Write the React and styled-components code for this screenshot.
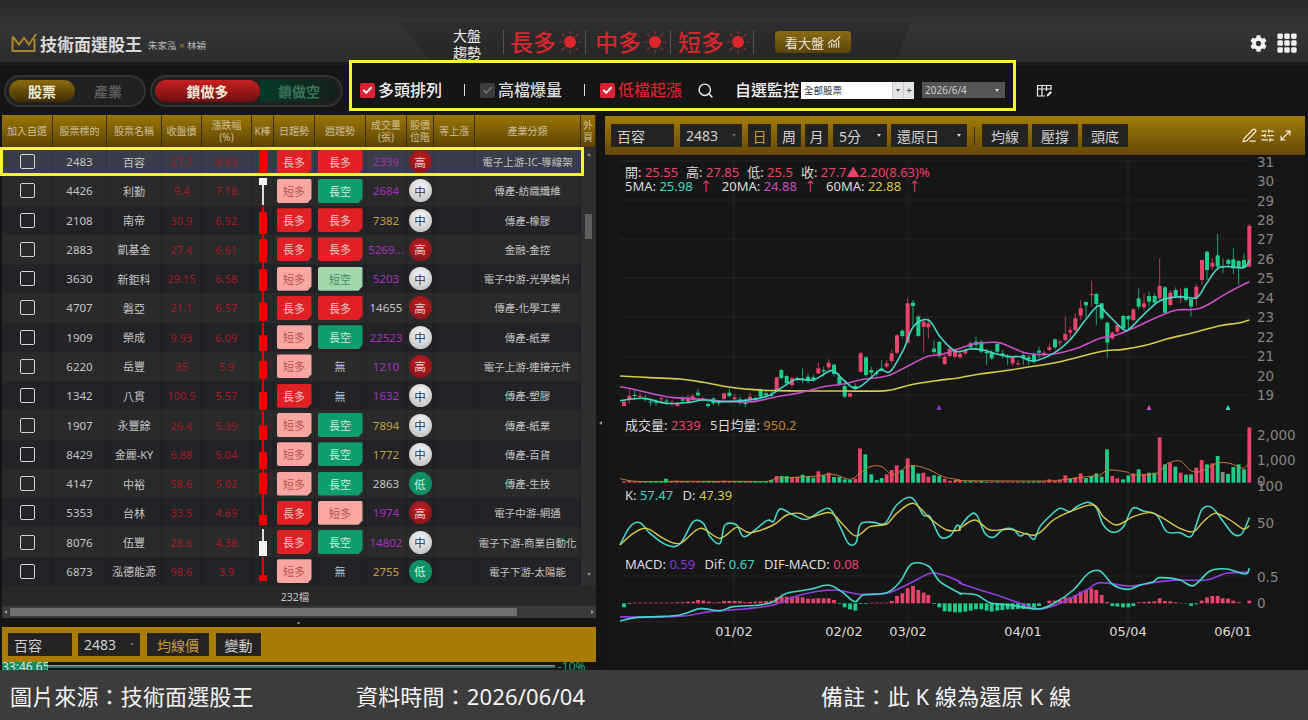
import React from 'react';
import styled, { createGlobalStyle } from 'styled-components';
import { Search, PenLine, SlidersHorizontal, MoveDiagonal, ChartNoAxesCombined, Check } from 'lucide-react';
import { FaCog } from 'react-icons/fa';
import { BsGrid3X3GapFill } from 'react-icons/bs';

const GlobalStyle = createGlobalStyle`
  html, body { margin: 0; padding: 0; background: #141414; overflow: hidden; }
  * { box-sizing: border-box; }
`;

const FONT = `"Noto Sans", "Noto Sans CJK TC", sans-serif`;
const RED = '#e8446a';
const GREEN = '#1fcc8a';
const CYAN = '#45d6c8';
const MAGENTA = '#c94fc4';
const YELLOW = '#d8c94a';
const PURPLE = '#8a3ad0';

const Page = styled.div`
  width: 1308px;
  height: 720px;
  display: flex;
  flex-direction: column;
  background: #141414;
  font-family: ${FONT};
  overflow: hidden;
`;

/* ---------- top bar ---------- */
const TopBar = styled.div`
  height: 62px;
  display: flex;
  padding-left: 11px;
  background: linear-gradient(#2a2a2a, #353535 45%, #2c2c2c);
`;

const Logo = styled.div`
  width: 387px;
  display: flex;
  align-items: center;
  padding-top: 24px;
`;

const LogoTitle = styled.span`
  margin-left: 3px;
  font-size: 17px;
  font-weight: 700;
  color: #d8d8d8;
`;

const LogoSub = styled.span`
  margin-left: 6px;
  font-size: 9.5px;
  color: #b8b8b8;
  margin-top: 3px;
  i { color: #a8862c; font-style: normal; }
`;

const TrendPanel = styled.div`
  position: relative;
  width: 525px;
  height: 40px;
  margin-top: 22px;
  padding-left: 55px;
  display: flex;
  align-items: center;
  &::before {
    content: '';
    position: absolute;
    inset: 0;
    background: linear-gradient(#2e2e2e, #262626);
    clip-path: polygon(2px 0, 514px 0, 497px 100%, 32px 100%);
  }
  & > * { position: relative; }
`;

const TrendLabel = styled.div`
  width: 28px;
  font-size: 14px;
  line-height: 17px;
  color: #ececec;
  margin-top: 3px;
`;

const TrendDivider = styled.div`
  width: 1px;
  height: 24px;
  background: #555;
  margin-left: ${p => p.$ml}px;
`;

const TrendText = styled.span`
  margin-left: ${p => p.$ml}px;
  font-size: 23px;
  font-weight: 500;
  line-height: 26px;
  color: #d8262c;
`;

const SunIcon = styled.svg`
  width: 24px;
  height: 24px;
  margin-left: 2px;
`;

const Sun = () => (
  <SunIcon viewBox="0 0 24 24">
    <circle cx="12" cy="12" r="6" fill="#e0262a" />
    <g stroke="#9a3030" strokeWidth="1.2" strokeLinecap="round">
      <path d="M12 1v3M12 20v3M1 12h3M20 12h3M4.2 4.2l2.1 2.1M17.7 17.7l2.1 2.1M4.2 19.8l2.1-2.1M17.7 6.3l2.1-2.1" />
    </g>
  </SunIcon>
);

const MarketButton = styled.div`
  margin-left: 21px;
  width: 76px;
  height: 22px;
  display: flex;
  align-items: center;
  justify-content: center;
  gap: 3px;
  border-radius: 4px;
  font-size: 13px;
  color: #e8e4d4;
  background: linear-gradient(#8a6a12, #5a430c);
`;

const Tools = styled.div`
  margin-left: auto;
  padding: 24px 10px 0 0;
  display: flex;
  align-items: center;
  gap: 9px;
  color: #f2f2f2;
`;

/* ---------- filter toolbar ---------- */
const Toolbar = styled.div`
  height: 51px;
  display: flex;
  align-items: flex-start;
  padding-left: 4px;
  background: #151515;
  border-top: 3px solid #1d1d1d;
`;

const Pill = styled.div`
  position: relative;
  width: ${p => p.$w}px;
  height: 32px;
  margin-top: 10px;
  margin-right: 4px;
  padding: 3px;
  display: flex;
  border-radius: 16px;
  background: #202020;
  border: 2px solid #333;
`;

const PillOn = styled.div`
  width: ${p => p.$w}px;
  display: flex;
  align-items: center;
  justify-content: center;
  border-radius: 13px;
  font-size: 14px;
  font-weight: 600;
  color: #f0ead8;
  background: ${p => p.$bg};
`;

const PillOff = styled.div`
  flex: 1;
  display: flex;
  align-items: center;
  justify-content: center;
  font-size: 14px;
  font-weight: 600;
  color: ${p => p.$color};
  background: ${p => p.$bg || 'none'};
  border-radius: 0 13px 13px 0;
`;

const FilterGroup = styled.div`
  position: relative;
  z-index: 2;
  width: 667px;
  height: 51px;
  margin: -5px 0 0 2px;
  padding: 9px 0 0 8px;
  display: flex;
  align-items: center;
  border: 3px solid #f6f62c;
  background: #151515;
`;

const CheckBox = styled.span`
  width: 15px;
  height: 15px;
  margin-right: 3px;
  display: inline-flex;
  align-items: center;
  justify-content: center;
  border-radius: 2px;
  color: ${p => (p.$on ? '#fff' : '#777')};
  background: ${p => (p.$on ? '#dc2230' : '#3c3c3c')};
`;

const FilterLabel = styled.span`
  font-size: 16px;
  font-weight: 500;
  line-height: 20px;
  white-space: nowrap;
  color: ${p => p.$color || '#f0f0f0'};
  margin-left: ${p => p.$ml || 0}px;
`;

const Pipe = styled.span`
  width: 1px;
  height: 12px;
  margin: 0 15px 0 22px;
  background: #ddd;
`;

const SearchSlot = styled.span`
  display: flex;
  margin-left: 15px;
  color: #eee;
`;

const WatchSelect = styled.div`
  width: 113px;
  height: 17px;
  margin-left: 2px;
  display: flex;
  background: #fff;
  font-size: 9.5px;
  line-height: 17px;
  color: #333;
`;

const WatchText = styled.span`
  flex: 1;
  padding-left: 3px;
`;

const WatchBtn = styled.span`
  width: 11px;
  display: flex;
  align-items: center;
  justify-content: center;
  background: #e4e4e4;
  border-left: 1px solid #ccc;
  color: #555;
  font-size: 10px;
`;

const Caret = styled.span`
  width: 0;
  height: 0;
  border-left: 2.5px solid transparent;
  border-right: 2.5px solid transparent;
  border-top: 3px solid ${p => p.$color || '#ddd'};
`;

const DateSelect = styled.div`
  width: 83px;
  height: 16px;
  margin-left: 8px;
  padding: 0 6px 0 3px;
  display: flex;
  align-items: center;
  justify-content: space-between;
  background: #555;
  font-size: 10px;
  color: #ccc;
`;

const EditSlot = styled.span`
  display: flex;
  margin: 19px 0 0 20px;
`;

/* ---------- main ---------- */
const Main = styled.div`
  height: 557px;
  display: flex;
  background: #141414;
`;

const LeftPanel = styled.div`
  width: 596px;
  padding: 2px 0 0 2px;
  display: flex;
  flex-direction: column;
  flex-shrink: 0;
`;

const COLS = '51px 54px 55px 40px 50px 22px 41px 51px 41px 27px 41px 106px';

const HeaderRow = styled.div`
  display: grid;
  grid-template-columns: ${COLS} 15px;
  height: 32px;
  background: linear-gradient(#9c7608, #5c4305);
`;

const HeadCell = styled.div`
  display: flex;
  align-items: center;
  justify-content: center;
  text-align: center;
  font-size: 10px;
  line-height: 12.5px;
  color: #ccbf98;
  border-right: 1px solid #3a2c06;
`;

const TableBody = styled.div`
  height: 439px;
  display: flex;
`;

const Rows = styled.div`
  width: 579px;
`;

const Row = styled.div`
  position: relative;
  display: grid;
  grid-template-columns: ${COLS};
  height: 29.27px;
  background: ${p => (p.$selected ? '#3a3c4a' : p.$alt ? '#2a2a2b' : '#232327')};
  ${p => p.$selected && `
    &::after {
      content: '';
      position: absolute;
      inset: 0 -3px 0 -2px;
      border: 3px solid #f6f62c;
      pointer-events: none;
    }
  `}
`;

const Cell = styled.div`
  display: flex;
  align-items: center;
  justify-content: center;
  min-width: 0;
  white-space: nowrap;
  overflow: hidden;
  font-size: ${p => p.$size || 11}px;
  color: ${p => p.$color || '#c4c4c4'};
  border-right: 1px solid rgba(0, 0, 0, 0.16);
`;

const RowCheck = styled.span`
  width: 15px;
  height: 15px;
  border: 1.5px solid #d4d4d4;
  border-radius: 2px;
`;

const Tag = styled.div`
  width: ${p => p.$w}px;
  height: 24px;
  display: flex;
  align-items: center;
  justify-content: center;
  font-size: 11px;
  border-radius: 2px;
  clip-path: polygon(0 0, 100% 0, 100% 82%, calc(100% - 4px) 100%, 0 100%);
  color: ${p => p.$color};
  background: ${p => p.$bg};
`;

const Badge = styled.div`
  width: 23px;
  height: 23px;
  display: flex;
  align-items: center;
  justify-content: center;
  border-radius: 50%;
  font-size: 11.5px;
  color: ${p => p.$color};
  background: ${p => p.$bg};
`;

const VScroll = styled.div`
  flex: 1;
  display: flex;
  flex-direction: column;
  align-items: center;
  background: #2e2e30;
  color: #888;
`;

const VThumb = styled.div`
  width: 7px;
  height: 25px;
  margin-top: 58px;
  background: #5e5e5e;
`;

const ScrollArrow = styled.span`
  width: 0;
  height: 0;
  margin-top: ${p => p.$mt || 0}px;
  border-left: 2.5px solid transparent;
  border-right: 2.5px solid transparent;
  border-${p => p.$side}: 3px solid #888;
`;

const TableFoot = styled.div`
  height: 20px;
  padding-right: 8px;
  display: flex;
  align-items: center;
  justify-content: center;
  font-size: 10.5px;
  color: #c4c4c4;
  background: #28282a;
`;

const HScroll = styled.div`
  height: 12px;
  padding: 0 2px;
  display: flex;
  align-items: center;
  background: #3a3a3a;
`;

const HThumb = styled.div`
  width: 507px;
  height: 8px;
  margin: 0 auto 0 3px;
  background: #707070;
`;

const SideArrow = styled.span`
  width: 0;
  height: 0;
  border-top: 2.5px solid transparent;
  border-bottom: 2.5px solid transparent;
  border-${p => p.$side}: 3px solid #999;
`;

const SplitGap = styled.div`
  height: 9px;
  display: flex;
  align-items: center;
  justify-content: center;
  padding-right: 2px;
`;

const Dot = styled.span`
  width: 3px;
  height: 2px;
  background: #666;
`;

const GoldBar = styled.div`
  height: 35px;
  padding-left: 6px;
  display: flex;
  align-items: center;
  gap: 6px;
  background: #a97c08;
`;

const Field = styled.div`
  width: ${p => p.$w}px;
  height: 23px;
  margin-left: ${p => p.$ml || 0}px;
  padding: 0 ${p => (p.$center ? 0 : 5)}px;
  display: flex;
  align-items: center;
  justify-content: ${p => (p.$center ? 'center' : 'space-between')};
  font-size: 14px;
  color: ${p => p.$color || '#d0d0d0'};
  background: #232323;
  border: 1px solid rgba(60, 40, 0, 0.5);
`;

const Strip = styled.div`
  height: 8px;
  display: flex;
  overflow: hidden;
  position: relative;
`;

const StripLabel = styled.div`
  width: 46px;
  font-size: 12px;
  line-height: 10px;
  color: #e0e0e0;
  background: #118a5e;
  white-space: nowrap;
  overflow: hidden;
`;

const StripTrack = styled.div`
  width: 507px;
  height: 3px;
  margin-top: 3px;
  background: #2f6f66;
  border-top: 1px solid #999;
`;

const StripEnd = styled.div`
  margin-left: 3px;
  font-size: 12px;
  line-height: 10px;
  color: #19a87a;
`;

const Splitter = styled.div`
  width: 9px;
  display: flex;
  align-items: center;
  justify-content: center;
  padding-top: 62px;
  flex-shrink: 0;
`;

const RightPanel = styled.div`
  width: 700px;
  padding-top: 3px;
  display: flex;
  flex-direction: column;
`;

const ChartBar = styled.div`
  height: 39px;
  padding: 0 12px 0 6px;
  display: flex;
  align-items: center;
  gap: 4px;
  background: linear-gradient(#a37c08, #64490a);
`;

const BarSep = styled.span`
  width: 1px;
  height: 18px;
  margin: 0 3px 0 3px;
  background: #3a2c06;
`;

const BarIcons = styled.div`
  margin-left: auto;
  display: flex;
  gap: 3px;
  color: #f4ecd4;
`;

const ChartArea = styled.div`
  position: relative;
  flex: 1;
  background: #161616;
`;

const ChartSvg = styled.svg`
  display: block;
  width: 700px;
  height: 515px;
`;

const Legend = styled.div`
  position: absolute;
  left: 20px;
  top: ${p => p.$top}px;
  font-size: 13px;
  line-height: 14px;
  color: #dcdcdc;
  white-space: nowrap;
  b { font-weight: 400; margin-right: ${p => p.$gap || 6}px; }
`;

const AxisText = styled.text`
  font-family: "DejaVu Sans", sans-serif;
  font-size: 13.5px;
  fill: #848484;
`;

const DateText = styled.text`
  font-family: "DejaVu Sans", sans-serif;
  font-size: 13px;
  fill: #dedede;
  text-anchor: middle;
`;

const Caption = styled.div`
  height: 50px;
  display: flex;
  align-items: center;
  padding-left: 10px;
  background: #3c3c3c;
  font-size: 22px;
  color: #f4f4f4;
  white-space: nowrap;
`;

const CaptionItem = styled.span`
  width: ${p => p.$w}px;
  letter-spacing: 0.15px;
`;

/* ---------- data ---------- */
const P = '#a034b8';
const G = '#c0a040';
const W = '#c4c4c4';
const rows = [
  ['2483', '百容', '27.7', '8.63', 'ld', 'ld', '2339', P, 'h', '電子上游-IC-導線架', [0, 29, 1, 29]],
  ['4426', '利勤', '9.4', '7.18', 'sd', 'lk', '2684', P, 'm', '傳產-紡織纖維', [2, 29, 2, 9, 1]],
  ['2108', '南帝', '30.9', '6.92', 'ld', 'ld', '7382', G, 'm', '傳產-橡膠', [0, 29, 6, 28]],
  ['2883', '凱基金', '27.4', '6.61', 'ld', 'ld', '5269...', P, 'h', '金融-金控', [0, 29, 4, 27]],
  ['3630', '新鉅科', '29.15', '6.58', 'sd', 'sk', '5203', P, 'm', '電子中游-光學鏡片', [0, 29, 5, 27]],
  ['4707', '磐亞', '21.1', '6.57', 'ld', 'ld', '14655', W, 'h', '傳產-化學工業', [0, 29, 9.5, 28]],
  ['1909', '榮成', '9.93', '6.09', 'sd', 'lk', '22523', P, 'm', '傳產-紙業', [0, 29, 12, 28]],
  ['6220', '岳豐', '35', '5.9', 'sd', 'no', '1210', P, 'h', '電子上游-連接元件', [0, 29, 9, 27]],
  ['1342', '八貫', '100.5', '5.57', 'ld', 'no', '1632', P, 'm', '傳產-塑膠', [0, 29, 11, 29]],
  ['1907', '永豐餘', '26.4', '5.39', 'sd', 'lk', '7894', G, 'm', '傳產-紙業', [0, 29, 14.5, 29]],
  ['8429', '金麗-KY', '6.88', '5.04', 'sd', 'lk', '1772', G, 'm', '傳產-百貨', [0, 29, 12, 29]],
  ['4147', '中裕', '58.6', '5.02', 'sd', 'lk', '2863', W, 'l', '傳產-生技', [0, 29, 4, 25]],
  ['5353', '台林', '33.5', '4.69', 'ld', 'sd', '1974', P, 'h', '電子中游-網通', [0, 28, 17, 27]],
  ['8076', '伍豐', '28.6', '4.38', 'ld', 'lk', '14802', P, 'm', '電子下游-商業自動化', [1, 28, 13, 28, 1]],
  ['6873', '泓德能源', '98.6', '3.9', 'sd', 'no', '2755', G, 'l', '電子下游-太陽能', [0, 24, 18, 24]],
];

const tagStyles = {
  ld: { text: '長多', bg: '#e02024', color: '#f4c8c8' },
  sd: { text: '短多', bg: '#f7a79f', color: '#b8504e' },
  lk: { text: '長空', bg: '#0f9d6e', color: '#d0ecdf' },
  sk: { text: '短空', bg: '#a2d6ac', color: '#3a8a60' },
};

const badgeStyles = {
  h: { text: '高', bg: 'radial-gradient(circle at 50% 40%, #c02024, #7a1216)', color: '#eccaca' },
  m: { text: '中', bg: 'radial-gradient(circle at 50% 35%, #fafafa, #b4b4b4)', color: '#333' },
  l: { text: '低', bg: '#0f8f66', color: '#d8f0e4' },
};

const headers = ['加入自選', '股票標的', '股票名稱', '收盤價', <>漲跌幅<br />(%)</>, 'K棒', '日趨勢', '週趨勢',
  <>成交量<br />(張)</>, <>股價<br />位階</>, '等上漲', '產業分類', <>外<br />買</>];

const KBar = ({ bar: [wt, wb, t, b, white] }) => {
  const color = white ? '#f4f4f4' : '#f00000';
  return (
    <svg width="12" height="29" viewBox="0 0 12 29">
      <rect x="5" y={wt} width="2" height={wb - wt} fill={white ? '#ddd' : '#e00000'} />
      <rect x="2" y={t} width="8" height={b - t} fill={color} />
    </svg>
  );
};

// chart traces: each block is written against a reference crop and moved to page coords
const cvt = (ox, oy, pts) => pts.map(([x, y]) => [ox + x / 3, oy + y / 3]);

// catmull-rom through the traced points, so the lines bend like the real indicators
const smooth = pts => {
  let d = `M${pts[0][0]} ${pts[0][1]}`;
  for (let i = 0; i < pts.length - 1; i++) {
    const p0 = pts[i - 1] || pts[i];
    const p1 = pts[i];
    const p2 = pts[i + 1];
    const p3 = pts[i + 2] || p2;
    const c1 = [p1[0] + (p2[0] - p0[0]) / 6, p1[1] + (p2[1] - p0[1]) / 6];
    const c2 = [p2[0] - (p3[0] - p1[0]) / 6, p2[1] - (p3[1] - p1[1]) / 6];
    d += ` C${c1[0]} ${c1[1]} ${c2[0]} ${c2[1]} ${p2[0]} ${p2[1]}`;
  }
  return d;
};

const line = (a, b, oa, ob) => smooth([...cvt(oa[0], oa[1], a), ...cvt(ob[0], ob[1], b)]);

const ma60 = line(
  [[30,678],[120,683],[210,687],[280,697],[350,710],[430,719],[500,722],[600,723],[700,723],[830,722],[900,705],[980,692],[1050,683]],
  [[60,672],[130,663],[200,652],[300,635],[420,605],[490,598],[560,585],[620,567],[700,548],[780,527],[830,520],[868,510]],
  [610,150],[960,150]);
const ma20 = line(
  [[30,710],[80,720],[130,732],[190,743],[240,745],[300,750],[360,755],[430,755],[500,740],[570,728],[640,710],[700,702],[760,688],[830,678],[890,650],[950,620],[1000,612],[1050,595]],
  [[40,582],[110,577],[150,590],[200,610],[280,612],[350,595],[420,565],[470,555],[530,530],[600,498],[650,480],[720,475],[800,430],[868,395]],
  [610,150],[960,150]);
const ma5 = line(
  [[30,752],[100,745],[170,760],[240,757],[280,750],[340,755],[430,748],[480,735],[520,710],[560,688],[610,690],[665,662],[700,690],[735,715],[770,695],[810,660],[840,665],[880,600],[910,530],[955,510],[990,560],[1030,600],[1050,605]],
  [[30,597],[70,600],[110,612],[150,620],[180,620],[220,633],[280,610],[330,570],[380,505],[415,467],[440,490],[490,538],[510,535],[545,500],[600,452],[660,440],[710,443],[740,400],[780,352],[850,353],[868,330]],
  [610,150],[960,150]);

const candlesA = [
  [42,'r',755,768,750,770],[58,'r',738,748,716,762],[74,'g',735,738,720,750],[90,'r',738,741,728,745],[106,'g',745,748,735,755],[122,'g',755,758,745,768],[138,'g',755,757,748,768],[154,'r',745,748,740,760],[170,'g',752,755,745,765],[186,'r',758,762,750,770],[202,'r',762,768,755,770],[218,'g',748,752,740,760],[234,'r',745,755,735,760],[248,'r',738,750,732,755],[264,'g',728,736,716,740],[278,'r',745,748,740,755],[294,'g',762,768,755,772],[310,'g',745,760,742,765],[326,'g',755,760,750,768],[342,'r',730,746,728,750],[358,'g',728,738,716,742],[374,'r',742,748,732,758],[390,'g',748,758,740,765],[406,'g',755,762,745,772],[420,'r',740,748,728,752],[436,'g',745,750,740,760],[452,'g',720,740,716,745],[468,'g',730,736,722,745],[484,'g',735,738,725,742],[500,'r',682,722,680,725],[514,'g',660,684,658,688],[530,'g',678,700,675,704],[546,'r',685,705,680,712],[562,'g',684,690,680,695],[578,'g',685,690,655,700],[594,'g',680,692,670,700],[610,'g',682,688,675,695],[625,'r',655,670,638,672],[641,'g',660,664,650,680],[656,'r',638,652,628,660],[672,'g',644,672,642,680],[688,'g',680,702,670,708],[704,'g',708,740,700,745],[720,'r',730,740,728,742],[736,'g',708,714,700,720],[752,'r',610,665,605,668],[768,'g',622,675,618,680],[784,'g',660,668,650,685],[800,'g',668,672,660,680],[815,'g',655,662,630,665],[830,'r',640,650,630,655],[845,'r',610,633,600,640],[861,'r',556,608,552,612],[877,'g',542,558,538,565],[893,'r',460,578,445,580],[909,'g',458,468,450,530],[925,'g',500,558,495,562],[941,'r',515,530,505,608],[955,'r',520,532,505,565],[972,'g',596,606,570,612],[988,'g',576,618,572,625],[1004,'r',620,642,615,645],[1019,'r',596,618,590,622],[1035,'r',600,620,595,625],
];
const candlesB = [
  [0,'r',612,622,600,628],[16,'r',600,610,595,615],[32,'g',580,592,575,600],[48,'g',575,585,560,600],[64,'g',575,605,570,610],[80,'g',605,610,595,645],[95,'g',608,625,600,630],[112,'g',582,605,578,612],[128,'g',610,615,600,625],[143,'g',620,622,612,645],[158,'r',622,640,618,648],[174,'r',640,643,630,650],[190,'g',615,625,610,645],[206,'g',622,628,615,645],[222,'g',612,635,608,640],[237,'g',602,608,590,625],[252,'r',608,615,602,620],[268,'r',592,600,580,604],[285,'g',568,592,565,598],[300,'r',575,578,570,590],[316,'r',552,570,500,575],[331,'r',540,548,530,570],[346,'r',505,540,490,545],[362,'r',475,497,450,510],[378,'g',456,466,454,500],[395,'r',432,435,392,470],[409,'g',432,462,428,525],[425,'g',460,505,458,510],[442,'g',518,578,515,622],[457,'r',548,565,545,570],[472,'r',525,545,520,550],[490,'g',498,535,495,540],[505,'g',498,508,495,540],[520,'r',478,510,475,515],[536,'g',445,470,415,478],[552,'r',460,472,430,480],[567,'g',438,455,425,470],[584,'g',438,458,430,462],[599,'r',408,445,325,450],[615,'g',412,488,408,490],[631,'r',428,465,420,470],[647,'g',420,438,412,445],[662,'r',438,445,415,460],[678,'g',415,450,412,455],[693,'g',448,470,445,500],[709,'r',410,445,402,470],[726,'r',330,390,328,405],[741,'g',305,360,302,390],[757,'r',338,350,325,360],[773,'g',316,350,252,360],[789,'g',350,353,325,370],[805,'g',330,342,325,350],[820,'g',328,355,295,372],[836,'g',333,352,330,405],[852,'g',330,352,310,355],[868,'r',228,350,222,352],
];

const volA = [
  [42,4,'r'],[58,5,'r'],[74,4,'r'],[90,3,'r'],[106,2,'g'],[122,2,'g'],[138,2,'g'],[154,2,'g'],[168,12,'g'],[184,4,'r'],[200,6,'r'],[216,3,'r'],[232,2,'g'],[248,2,'r'],[264,2,'r'],[280,2,'g'],[296,4,'g'],[312,3,'g'],[326,3,'r'],[342,6,'r'],[358,3,'r'],[374,3,'g'],[390,3,'g'],[406,3,'g'],[420,4,'r'],[436,3,'g'],[452,3,'g'],[468,3,'g'],[484,8,'g'],[500,20,'r'],[515,20,'g'],[530,20,'g'],[546,16,'r'],[562,18,'r'],[578,24,'g'],[594,18,'g'],[610,15,'g'],[625,34,'r'],[641,22,'g'],[656,30,'r'],[672,17,'g'],[688,17,'g'],[704,10,'g'],[720,8,'g'],[736,12,'r'],[750,103,'r'],[766,85,'g'],[784,25,'g'],[800,8,'g'],[815,14,'g'],[830,25,'r'],[845,38,'r'],[860,52,'r'],[876,38,'g'],[893,73,'r'],[909,52,'g'],[925,28,'g'],[940,30,'r'],[955,18,'r'],[972,22,'g'],[988,20,'g'],[1004,12,'r'],[1020,6,'r'],[1035,6,'r'],
];
const volB = [
  [0,8,'r'],[16,4,'g'],[32,5,'g'],[48,4,'r'],[64,5,'g'],[80,3,'g'],[95,3,'r'],[112,3,'g'],[128,3,'r'],[143,3,'r'],[158,3,'r'],[174,3,'r'],[190,3,'g'],[206,3,'g'],[222,3,'g'],[237,4,'g'],[252,4,'r'],[268,10,'r'],[285,6,'r'],[300,8,'r'],[316,22,'r'],[331,12,'g'],[346,16,'r'],[362,28,'r'],[378,14,'g'],[394,20,'g'],[409,28,'g'],[425,18,'g'],[441,100,'g'],[457,20,'r'],[472,13,'r'],[489,10,'g'],[505,22,'g'],[520,28,'r'],[536,40,'g'],[552,26,'r'],[567,30,'g'],[583,30,'g'],[599,136,'r'],[615,55,'g'],[630,60,'r'],[646,48,'g'],[662,30,'r'],[678,24,'g'],[693,25,'g'],[709,45,'r'],[725,68,'r'],[741,55,'g'],[757,58,'r'],[773,80,'g'],[788,32,'x'],[804,26,'g'],[820,47,'g'],[836,55,'g'],[852,40,'g'],[868,166,'r'],
];
const volMa = line(
  [[30,206],[80,214],[200,214],[400,214],[470,214],[500,205],[560,202],[620,198],[670,193],[720,208],[750,190],[780,170],[815,170],[850,195],[890,170],[920,168],[960,180],[1000,200],[1050,210]],
  [[0,212],[250,213],[300,210],[380,200],[420,195],[445,180],[500,186],[520,195],[590,190],[620,162],[660,153],[690,180],[720,185],[770,160],[810,160],[850,175],[868,155]],
  [610,410],[960,410]);

const kLine = line(
  [[30,405],[60,350],[90,338],[120,370],[170,405],[210,402],[250,335],[280,340],[300,380],[330,400],[345,345],[380,345],[405,380],[470,332],[490,335],[510,297],[550,315],[590,328],[655,295],[690,350],[715,400],[738,398],[752,342],[790,337],[825,340],[860,285],[905,263],[940,315],[960,320],[990,380],[1020,378],[1040,347],[1050,350]],
  [[0,350],[30,315],[50,315],[75,370],[100,382],[130,358],[160,358],[180,378],[200,370],[222,388],[240,350],[270,318],[300,295],[330,305],[350,290],[385,277],[410,295],[430,345],[460,367],[490,350],[518,295],[550,303],[590,315],[620,365],[660,368],[695,378],[725,300],[755,292],[790,335],[820,372],[845,372],[868,323]],
  [610,410],[960,410]);
const dLine = line(
  [[30,405],[70,370],[110,355],[160,385],[210,400],[270,355],[330,385],[380,352],[420,368],[490,345],[530,315],[570,310],[600,322],[660,308],[700,345],[738,378],[780,350],[830,342],[860,310],[910,280],[960,325],[1010,360],[1050,360]],
  [[0,355],[45,330],[90,360],[150,358],[225,375],[280,330],[330,305],[400,285],[430,320],[470,345],[520,320],[570,308],[610,325],[660,355],[700,365],[730,335],[765,310],[810,330],[850,357],[868,347]],
  [610,410],[960,410]);
const difLine = line(
  [[30,633],[80,622],[140,620],[210,615],[270,596],[330,602],[370,590],[450,585],[490,575],[530,550],[600,538],[655,525],[695,545],[735,575],[760,555],[830,548],[870,515],[905,462],[955,468],[990,515],[1050,550]],
  [[0,550],[50,555],[90,578],[150,585],[235,597],[290,575],[340,540],[385,490],[420,483],[460,525],[505,538],[540,525],[580,515],[598,503],[660,510],[700,527],[750,483],[800,477],[855,492],[868,475]],
  [610,410],[960,410]);
const macdLine = line(
  [[30,620],[100,622],[220,618],[300,605],[400,597],[490,585],[570,555],[670,540],[750,553],[830,550],[900,520],[960,490],[1000,495],[1050,515]],
  [[0,520],[60,540],[110,555],[180,580],[240,597],[300,580],[380,540],[420,518],[510,528],[600,515],[660,510],[740,510],[800,490],[868,487]],
  [610,410],[960,410]);

const histA = [
  [42,-12],[58,-2],[74,2],[90,2],[106,2],[122,2],[138,2],[154,2],[170,2],[186,2],[202,3],[218,3],[234,5],[250,5],[264,10],[280,8],[296,5],[312,2],[326,3],[342,7],[358,7],[374,7],[390,6],[405,3],[420,4],[436,5],[452,6],[468,7],[484,8],[500,18],[515,20],[530,20],[546,20],[562,20],[578,18],[594,14],[610,14],[625,15],[641,15],[656,15],[672,10],[688,-2],[704,-12],[720,-18],[736,-22],[752,-2],[768,-2],[784,2],[800,2],[815,2],[830,2],[845,7],[861,22],[877,30],[893,45],[909,52],[925,40],[941,32],[955,25],[972,-2],[988,-12],[1004,-24],[1019,-25],[1035,-27],
];
const histB = [
  [0,-27],[16,-25],[32,-22],[48,-18],[64,-18],[80,-22],[95,-25],[112,-22],[127,-20],[143,-18],[158,-18],[174,-17],[190,-17],[206,-15],[222,-17],[237,-8],[268,8],[285,8],[300,10],[316,18],[331,18],[346,25],[362,35],[378,40],[394,45],[409,40],[425,25],[441,4],[457,-8],[472,-10],[489,-12],[505,-12],[520,-8],[536,3],[552,4],[567,5],[583,6],[599,15],[615,7],[631,6],[647,3],[662,1],[678,-1],[693,-8],[709,-3],[725,8],[741,18],[757,22],[773,22],[788,15],[804,14],[820,8],[836,3],[868,8],
];

const volColor = c => (c === 'r' ? RED : c === 'g' ? GREEN : '#888');

const Candles = ({ data, ox }) => data.map(([x, c, t, b, wt, wb]) => {
  const px = ox + x / 3;
  const color = volColor(c);
  return (
    <g key={x}>
      <line x1={px} x2={px} y1={150 + wt / 3} y2={150 + wb / 3} stroke={color} strokeWidth="1" opacity="0.75" />
      <rect x={px - 2} y={150 + t / 3} width="4" height={Math.max((b - t) / 3, 1)} fill={color} />
    </g>
  );
});

const VolBars = ({ data, ox }) => data.map(([x, h, c]) => (
  <rect key={x} x={ox + x / 3 - 1.9} y={482.7 - h / 3} width="3.8" height={h / 3} fill={volColor(c)} />
));

const HistBars = ({ data, ox }) => data.map(([x, v]) => (
  <rect
    key={x}
    x={ox + x / 3 - 1.9}
    y={v > 0 ? 603.3 - v / 3 : 603.3}
    width="3.8"
    height={Math.abs(v) / 3}
    fill={v > 0 ? RED : GREEN}
  />
));

const Curve = styled.path`
  fill: none;
  stroke: ${p => p.$c};
  stroke-width: ${p => p.$w || 1.6};
  stroke-linejoin: round;
`;

const gridY = [161, 200, 239, 278, 317, 357, 395, 435, 576, 622];
const gridX = [734, 908, 1128];
const priceTicks = [31, 30, 29, 28, 27, 26, 25, 24, 23, 22, 21, 20, 19];
const sideTicks = [['2,000', 435], ['1,000', 459.5], ['0', 481], ['100', 486], ['50', 523], ['0.5', 577], ['0', 603]];
const dates = [['01/02', 734], ['02/02', 844], ['03/02', 908], ['04/01', 1023], ['05/04', 1128], ['06/01', 1233]];
const markers = [[939, PURPLE], [1149, MAGENTA], [1228, CYAN]];

const PriceChart = () => (
  <ChartSvg viewBox="605 155 700 515">
    {gridY.map(y => <line key={y} x1="620" x2="1250" y1={y} y2={y} stroke="#242424" />)}
    {gridX.map(x => <line key={x} x1={x} x2={x} y1="158" y2="645" stroke="#242424" />)}

    <Candles data={candlesA} ox={610} />
    <Candles data={candlesB} ox={960} />
    <Curve d={ma60} $c={YELLOW} />
    <Curve d={ma20} $c={MAGENTA} />
    <Curve d={ma5} $c={CYAN} />
    {markers.map(([x, c]) => <polygon key={x} points={`${x - 2.5},410 ${x + 2.5},410 ${x},405`} fill={c} />)}

    <VolBars data={volA} ox={610} />
    <VolBars data={volB} ox={960} />
    <Curve d={volMa} $c="#c08038" $w={1} />

    <Curve d={kLine} $c={CYAN} />
    <Curve d={dLine} $c={YELLOW} $w={1.4} />

    <HistBars data={histA} ox={610} />
    <HistBars data={histB} ox={960} />
    <Curve d={macdLine} $c="#9040e0" />
    <Curve d={difLine} $c={CYAN} />

    {priceTicks.map(p => <AxisText key={p} x="1257" y={395 - (p - 19) * 19.45 + 5}>{p}</AxisText>)}
    {sideTicks.map(([t, y]) => <AxisText key={t + y} x="1257" y={y + 5}>{t}</AxisText>)}
    {dates.map(([t, x]) => <DateText key={t} x={x} y="636">{t}</DateText>)}
  </ChartSvg>
);

const Val = styled.span`
  color: ${p => p.$c};
`;

const StockTable = () => (
  <>
    <HeaderRow>
      {headers.map((h, i) => <HeadCell key={i}>{h}</HeadCell>)}
    </HeaderRow>
    <TableBody>
      <Rows>
        {rows.map((r, i) => {
          const badge = badgeStyles[r[8]];
          return (
            <Row key={r[0]} $selected={i === 0} $alt={i % 2 === 1}>
              <Cell><RowCheck /></Cell>
              <Cell $size={11.5}>{r[0]}</Cell>
              <Cell>{r[1]}</Cell>
              <Cell $color="#a01c22">{r[2]}</Cell>
              <Cell $color="#a01c22">{r[3]}</Cell>
              <Cell><KBar bar={r[10]} /></Cell>
              <Cell><Tag $w={35} $bg={tagStyles[r[4]].bg} $color={tagStyles[r[4]].color}>{tagStyles[r[4]].text}</Tag></Cell>
              <Cell>
                {r[5] === 'no'
                  ? '無'
                  : <Tag $w={45} $bg={tagStyles[r[5]].bg} $color={tagStyles[r[5]].color}>{tagStyles[r[5]].text}</Tag>}
              </Cell>
              <Cell $color={r[7]} $size={11.5}>{r[6]}</Cell>
              <Cell><Badge $bg={badge.bg} $color={badge.color}>{badge.text}</Badge></Cell>
              <Cell />
              <Cell $size={10.5}>{r[9]}</Cell>
            </Row>
          );
        })}
      </Rows>
      <VScroll>
        <ScrollArrow $side="bottom" $mt={6} />
        <VThumb />
        <ScrollArrow $side="top" $mt={334} />
      </VScroll>
    </TableBody>
    <TableFoot>232檔</TableFoot>
    <HScroll>
      <SideArrow $side="right" />
      <HThumb />
      <SideArrow $side="left" />
    </HScroll>
  </>
);

const App = () => (
  <Page>
    <GlobalStyle />
    <TopBar>
      <Logo>
        <svg width="26" height="20" viewBox="0 0 26 20" fill="none" stroke="#a8862c" strokeWidth="2">
          <path d="M1.5 4V18H23.5V6M1.5 3.5L8 11.5L13 5L18 11.5L25 1" />
        </svg>
        <LogoTitle>技術面選股王</LogoTitle>
        <LogoSub>朱家泓 <i>×</i> 林穎</LogoSub>
      </Logo>
      <TrendPanel>
        <TrendLabel>大盤趨勢</TrendLabel>
        <TrendDivider $ml={22} />
        <TrendText $ml={6}>長多</TrendText>
        <Sun />
        <TrendDivider $ml={3} />
        <TrendText $ml={9}>中多</TrendText>
        <Sun />
        <TrendDivider $ml={3} />
        <TrendText $ml={7}>短多</TrendText>
        <Sun />
        <TrendDivider $ml={3} />
        <MarketButton>看大盤<ChartNoAxesCombined size={14} /></MarketButton>
      </TrendPanel>
      <Tools>
        <FaCog size={17} />
        <BsGrid3X3GapFill size={22} />
      </Tools>
    </TopBar>

    <Toolbar>
      <Pill $w={142}>
        <PillOn $w={66} $bg="linear-gradient(#8c6a0c, #3e2e06)">股票</PillOn>
        <PillOff $color="#5c5c5c">產業</PillOff>
      </Pill>
      <Pill $w={193}>
        <PillOn $w={105} $bg="linear-gradient(#c8201f, #6e0f10)">鎖做多</PillOn>
        <PillOff $color="#3a7458" $bg="linear-gradient(90deg, #063a28, #141f1a)">鎖做空</PillOff>
      </Pill>
      <FilterGroup>
        <CheckBox $on><Check size={11} strokeWidth={4} /></CheckBox>
        <FilterLabel>多頭排列</FilterLabel>
        <Pipe />
        <CheckBox><Check size={11} strokeWidth={3} /></CheckBox>
        <FilterLabel $color="#dcdcdc">高檔爆量</FilterLabel>
        <Pipe />
        <CheckBox $on><Check size={11} strokeWidth={4} /></CheckBox>
        <FilterLabel $color="#d8222c">低檔起漲</FilterLabel>
        <SearchSlot><Search size={17} /></SearchSlot>
        <FilterLabel $ml={21}>自選監控</FilterLabel>
        <WatchSelect>
          <WatchText>全部股票</WatchText>
          <WatchBtn><Caret $color="#555" /></WatchBtn>
          <WatchBtn>+</WatchBtn>
        </WatchSelect>
        <DateSelect>2026/6/4<Caret /></DateSelect>
      </FilterGroup>
      <EditSlot>
        <svg width="17" height="14" viewBox="0 0 17 14" fill="none" stroke="#eee" strokeWidth="1.2">
          <path d="M9 12H1.5V1.5H15V6M1.5 5H15M6 1.5V12M10.5 1.5V7" />
          <path d="M10.5 12.5L11 10.5L14.5 7L16 8.5L12.5 12Z" fill="#eee" stroke="none" />
        </svg>
      </EditSlot>
    </Toolbar>

    <Main>
      <LeftPanel>
        <StockTable />
        <SplitGap><Dot /></SplitGap>
        <GoldBar>
          <Field $w={64}>百容</Field>
          <Field $w={62}>2483<Caret $color="#666" /></Field>
          <Field $w={62} $ml={1} $center $color="#c89a3a">均線價</Field>
          <Field $w={45} $ml={1} $center>變動</Field>
        </GoldBar>
        <Strip>
          <StripLabel>33:46 65</StripLabel>
          <StripTrack />
          <StripEnd>-10%</StripEnd>
        </Strip>
      </LeftPanel>

      <Splitter><SideArrow $side="right" /></Splitter>

      <RightPanel>
        <ChartBar>
          <Field $w={63}>百容</Field>
          <Field $w={62} $ml={2}>2483<Caret $color="#666" /></Field>
          <Field $w={23} $ml={2} $center $color="#c89a3a">日</Field>
          <Field $w={24} $ml={2} $center>周</Field>
          <Field $w={23} $center>月</Field>
          <Field $w={54} $ml={1}>5分<Caret /></Field>
          <Field $w={76}>還原日<Caret /></Field>
          <BarSep />
          <Field $w={46} $center>均線</Field>
          <Field $w={46} $center>壓撐</Field>
          <Field $w={46} $center>頭底</Field>
          <BarIcons>
            <PenLine size={15} />
            <SlidersHorizontal size={15} />
            <MoveDiagonal size={15} />
          </BarIcons>
        </ChartBar>
        <ChartArea>
          <PriceChart />
          <Legend $top={10} $gap={8}>
            <b>開: <Val $c={RED}>25.55</Val></b>
            <b>高: <Val $c={RED}>27.85</Val></b>
            <b>低: <Val $c={RED}>25.5</Val></b>
            <b>收: <Val $c={RED}>27.7▲2.20(8.63)%</Val></b>
          </Legend>
          <Legend $top={24}>
            <b>5MA: <Val $c={CYAN}>25.98</Val> &nbsp;<Val $c={RED}>↑</Val></b>{' '}
            <b>20MA: <Val $c={MAGENTA}>24.88</Val> &nbsp;<Val $c={RED}>↑</Val></b>{' '}
            <b>60MA: <Val $c={YELLOW}>22.88</Val> &nbsp;<Val $c={RED}>↑</Val></b>
          </Legend>
          <Legend $top={263}>
            <b>成交量: <Val $c={RED}>2339</Val></b>{' '}
            <b>5日均量: <Val $c="#c08038">950.2</Val></b>
          </Legend>
          <Legend $top={333}>
            <b>K: <Val $c={CYAN}>57.47</Val></b>{' '}
            <b>D: <Val $c={YELLOW}>47.39</Val></b>
          </Legend>
          <Legend $top={402}>
            <b>MACD: <Val $c={PURPLE}>0.59</Val></b>{' '}
            <b>Dif: <Val $c={CYAN}>0.67</Val></b>{' '}
            <b>DIF-MACD: <Val $c={RED}>0.08</Val></b>
          </Legend>
        </ChartArea>
      </RightPanel>
    </Main>

    <Caption>
      <CaptionItem $w={346}>圖片來源：技術面選股王</CaptionItem>
      <CaptionItem $w={465}>資料時間：2026/06/04</CaptionItem>
      <CaptionItem>備註：此 K 線為還原 K 線</CaptionItem>
    </Caption>
  </Page>
);

export default App;
